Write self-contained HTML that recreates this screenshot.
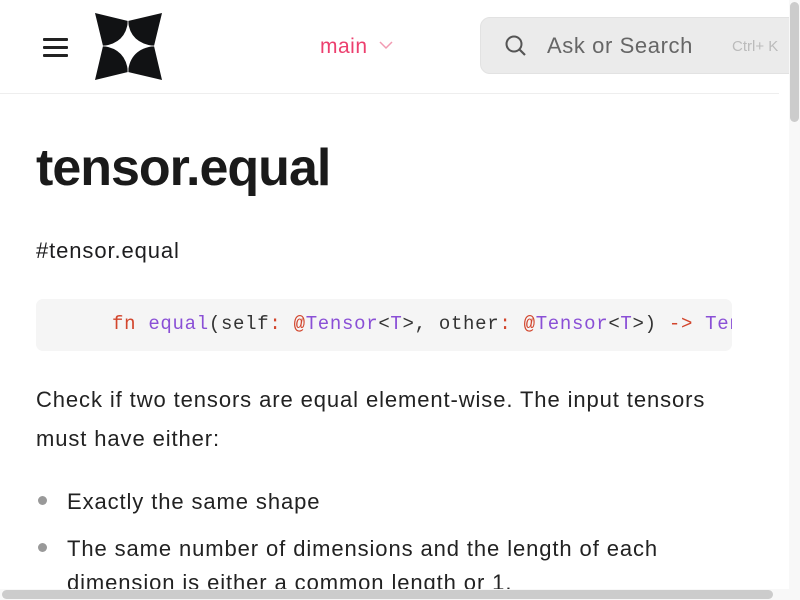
<!DOCTYPE html>
<html><head><meta charset="utf-8"><style>
html,body{margin:0;padding:0;width:800px;height:600px;overflow:hidden;background:#fff;font-family:"Liberation Sans",sans-serif;color:#1d1d1f}
.hdr{position:absolute;left:0;top:0;width:779px;height:93px;border-bottom:1px solid #eee}
.burger{position:absolute;left:43px;top:38px;width:25px}
.burger div{height:2.5px;background:#222;margin-bottom:5.5px;border-radius:1px}
.main{position:absolute;left:320px;top:35px;font-size:21px;color:#ec3f6e;letter-spacing:0.5px}
.search{position:absolute;left:480px;top:17px;width:320px;height:57px;background:#ebebeb;border:1px solid #e2e2e2;border-radius:10px;box-sizing:border-box}
.search .t{position:absolute;left:66px;top:15px;font-size:22px;color:#666;letter-spacing:0.6px}
.search .k{position:absolute;left:251px;top:20px;font-size:15px;color:#bbb}
h1{position:absolute;left:36px;top:138px;margin:0;font-size:52px;font-weight:bold;letter-spacing:-1px;color:#1a1a1a}
.anchor{position:absolute;left:36px;top:238px;font-size:22px;letter-spacing:0.9px}
.code{position:absolute;left:36px;top:299px;width:696px;height:52px;background:#f5f5f5;border-radius:7px;overflow:hidden}
.code pre{margin:0;position:absolute;left:76px;top:14px;font-family:"Liberation Mono",monospace;font-size:19px;letter-spacing:0.7px;color:#333;white-space:pre}
.r{color:#d2452c}.p{color:#8a4fd6}
.txt{position:absolute;left:36px;font-size:22px;letter-spacing:0.9px;color:#222;white-space:nowrap}
.dot{position:absolute;left:38px;width:9px;height:9px;border-radius:50%;background:#999}
.vs{position:absolute;left:789px;top:0;width:11px;height:600px;background:#f8f8f8}
.vs div{position:absolute;left:1px;top:2px;width:9px;height:120px;background:#ccc;border-radius:5px}
.hs{position:absolute;left:0;top:589px;width:789px;height:11px;background:#f8f8f8}
.hs div{position:absolute;left:2px;top:1px;width:771px;height:9px;background:#ccc;border-radius:5px}
</style></head><body>
<div class="hdr">
<div class="burger"><div></div><div></div><div></div></div>
<svg style="position:absolute;left:94px;top:12px" width="70" height="69" viewBox="0 0 70 69">
<path d="M1 1 L34 9 L68 1 L60 34 L68 68 L34 60 L1 68 L9 34 Z" fill="#111214"/>
<path d="M34 9 Q36 31 60 34 Q36 37 34 60 Q32 37 9 34 Q32 31 34 9 Z" fill="#fff"/>
<path d="M34 1 V68 M1 34 H68" stroke="#fff" stroke-width="0.8"/>
</svg>
<div class="main">main <svg width="16" height="10" viewBox="0 0 16 10" style="margin-left:4px;vertical-align:3px"><path d="M2 2 L8 8 L14 2" fill="none" stroke="#f29ab2" stroke-width="1.5"/></svg></div>
<div class="search">
<svg style="position:absolute;left:23px;top:16px" width="24" height="24" viewBox="0 0 24 24"><circle cx="10" cy="10" r="7.5" fill="none" stroke="#555" stroke-width="2"/><path d="M15.5 15.5 L21 21" stroke="#555" stroke-width="2.2"/></svg>
<div class="t">Ask or Search</div><div class="k">Ctrl+ K</div>
</div>
</div>
<h1>tensor.equal</h1>
<div class="anchor">#tensor.equal</div>
<div class="code"><pre><span class="r">fn</span> <span class="p">equal</span>(self<span class="r">:</span> <span class="r">@</span><span class="p">Tensor</span>&lt;<span class="p">T</span>&gt;, other<span class="r">:</span> <span class="r">@</span><span class="p">Tensor</span>&lt;<span class="p">T</span>&gt;) <span class="r">-&gt;</span> <span class="p">Tensor</span>&lt;bool&gt;</pre></div>
<div class="txt" style="top:387px">Check if two tensors are equal element-wise. The input tensors</div>
<div class="txt" style="top:426px">must have either:</div>
<div class="dot" style="top:496px"></div>
<div class="txt" style="left:67px;top:489px">Exactly the same shape</div>
<div class="dot" style="top:543px"></div>
<div class="txt" style="left:67px;top:536px">The same number of dimensions and the length of each</div>
<div class="txt" style="left:67px;top:570px">dimension is either a common length or 1.</div>
<div class="vs"><div></div></div>
<div class="hs"><div></div></div>
</body></html>
